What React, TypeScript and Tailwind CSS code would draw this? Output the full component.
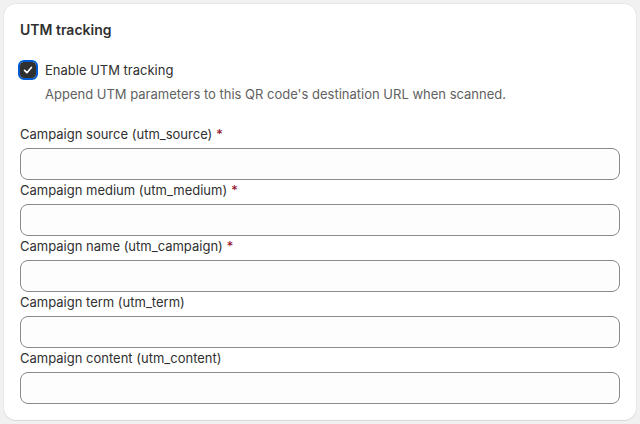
const FIELDS = [
  { label: 'Campaign source (utm_source)', required: true },
  { label: 'Campaign medium (utm_medium)', required: true },
  { label: 'Campaign name (utm_campaign)', required: true },
  { label: 'Campaign term (utm_term)', required: false },
  { label: 'Campaign content (utm_content)', required: false },
]

export default function App() {
  return (
    <div
      className="h-[424px] w-[640px] bg-[#f1f1f1] p-1 text-[13px] text-[#303030]"
      style={{ fontFamily: 'Inter, "Noto Sans", sans-serif' }}
    >
      <div className="flex flex-col rounded-xl bg-white px-4 pt-4 pb-4 shadow-[0_1px_0_0_rgba(26,26,26,0.07),0_0_0_1px_rgba(0,0,0,0.04)]">
        <h2 className="h-5 text-[14px] font-semibold leading-5">UTM tracking</h2>

        <div className="mt-5 flex h-5 items-center gap-[7px]">
          <span className="-ml-0.5 flex h-5 w-5 shrink-0 items-center justify-center rounded-[6px] border-2 border-[#005bd3]">
            <span className="flex h-4 w-4 items-center justify-center rounded-[4px] bg-[#303030]">
              <svg viewBox="0 0 16 16" className="h-4 w-4" fill="none" stroke="white" strokeWidth="1.7" strokeLinecap="round" strokeLinejoin="round">
                <path d="M4.6 8.4l2.3 2.3 4.5-5.2" />
              </svg>
            </span>
          </span>
          <span className="leading-5">Enable UTM tracking</span>
        </div>
        <p className="mt-1 pl-[25px] leading-5 text-[#616161]">
          Append UTM parameters to this QR code's destination URL when scanned.
        </p>

        <div className="mt-5 flex flex-col">
          {FIELDS.map((f) => (
            <div key={f.label} className="flex flex-col">
              <label className="flex h-5 items-center gap-1 leading-5">
                <span>{f.label}</span>
                {f.required && <span className="text-[#8e0b21]">*</span>}
              </label>
              <input
                type="text"
                className="mt-1 h-8 w-full rounded-lg border border-[#8a8a8a] bg-[#fdfdfd] px-3 outline-none"
              />
            </div>
          ))}
        </div>
      </div>
    </div>
  )
}
